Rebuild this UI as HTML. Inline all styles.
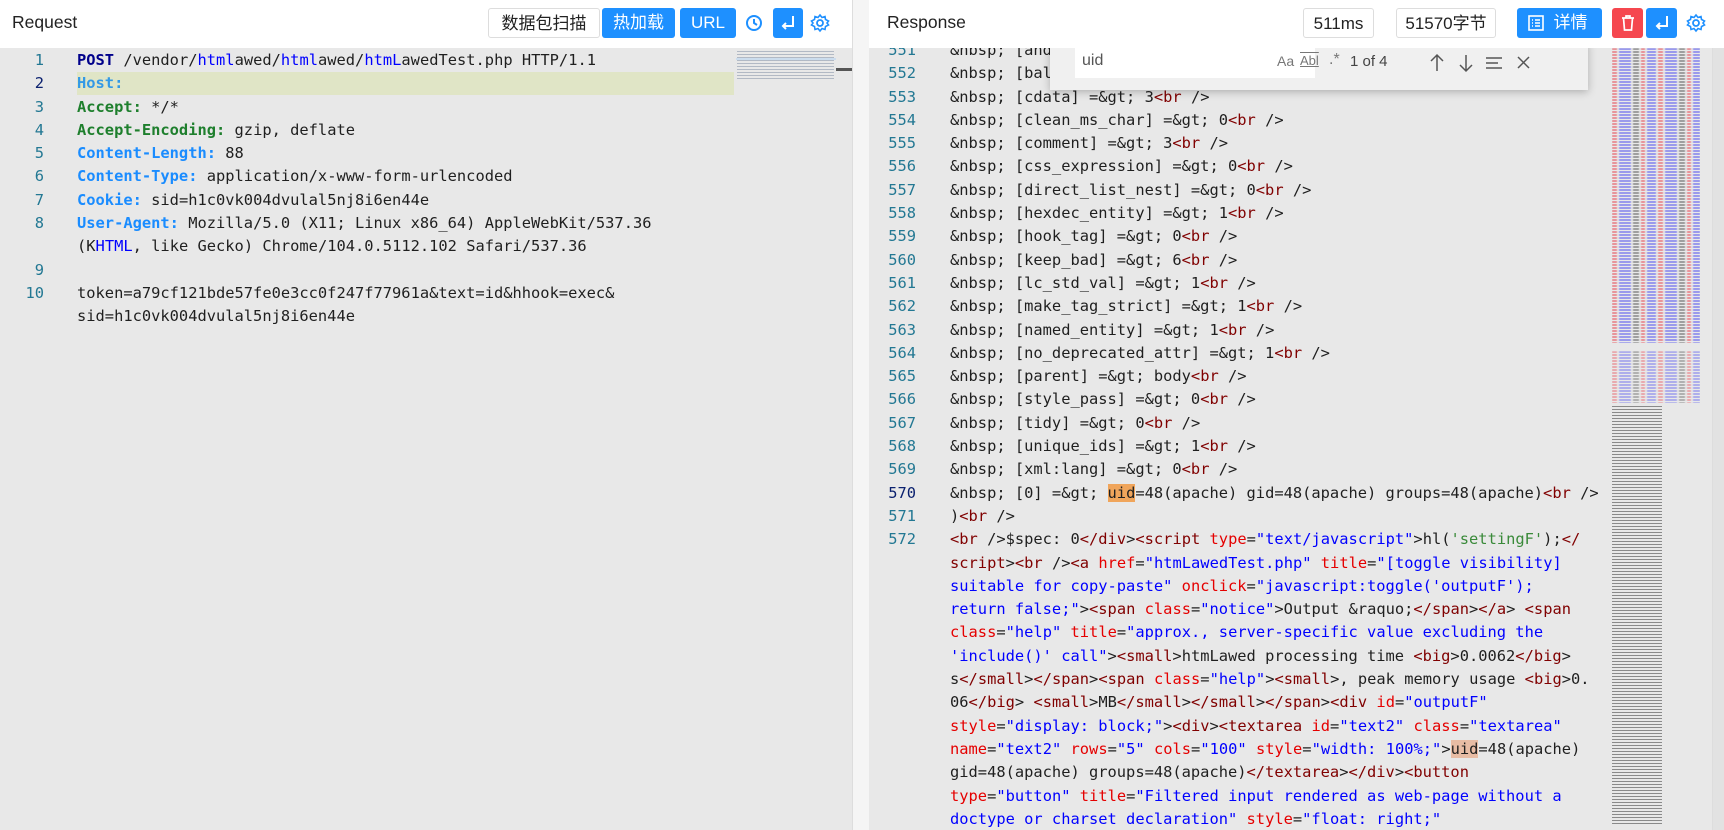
<!DOCTYPE html>
<html><head><meta charset="utf-8">
<style>
*{margin:0;padding:0;box-sizing:border-box}
body{width:1724px;height:830px;overflow:hidden;background:#f5f5f5;font-family:"Liberation Sans","Noto Sans CJK SC",sans-serif;position:relative}
.hdr{position:absolute;top:0;height:48px;background:#fff}
.title{position:absolute;top:12px;font-size:17.5px;color:#222}
.btn{position:absolute;top:8px;height:30px;border-radius:3px;font-size:17px;line-height:30px;text-align:center;color:#fff;background:#1e90ff}
.wb{background:#fff;color:#222;border:1px solid #ddd}
.ed{position:absolute;top:48px;bottom:0;background:#e8e8e8;overflow:hidden}
.code{position:absolute;font-family:"DejaVu Sans Mono",monospace;font-size:15.4px;line-height:23.3px;white-space:pre;color:#1f1f1f}
.ln{position:absolute;font-family:"DejaVu Sans Mono",monospace;font-size:15.4px;line-height:23.3px;white-space:pre;color:#237893;text-align:right}
.g{color:#1e7f2d;font-weight:bold}.b{color:#1a8cff;font-weight:bold}.bl{color:#0000ff}
.t{color:#800000}.a{color:#e50000}.s{color:#0000ff}.gr{color:#3a8a3a}
.hl{background:#f0a55b}.hl2{background:#e8bca4}
.mm{position:absolute;
background-image:repeating-linear-gradient(90deg,rgba(230,60,70,.8) 0 5px,transparent 5px 7px,rgba(70,70,240,.8) 7px 19px,transparent 19px 21px,rgba(60,60,60,.7) 21px 27px,transparent 27px 29px,rgba(230,60,70,.8) 29px 33px,transparent 33px 35px,rgba(70,70,240,.8) 35px 44px,transparent 44px 46px);
-webkit-mask:repeating-linear-gradient(180deg,#000 0 2px,transparent 2px 3px);mask:repeating-linear-gradient(180deg,#000 0 2px,transparent 2px 3px);opacity:.6;filter:blur(.4px)}
</style></head><body>

<!-- left header -->
<div class="hdr" style="left:0;width:852px"></div>
<div class="title" style="left:12px">Request</div>
<div class="btn wb" style="left:488px;width:112px">数据包扫描</div>
<div class="btn" style="left:602px;width:73px">热加载</div>
<div class="btn" style="left:680px;width:56px">URL</div>
<svg style="position:absolute;left:744px;top:12px" width="20" height="22" viewBox="0 0 20 22"><circle cx="10" cy="11" r="7" fill="none" stroke="#1e90ff" stroke-width="2"/><path d="M10 7v4l3 2" fill="none" stroke="#1e90ff" stroke-width="2"/></svg>
<div class="btn" style="left:773px;width:30px"></div>
<svg style="position:absolute;left:777px;top:13px" width="22" height="20" viewBox="0 0 22 20"><path d="M16 3v10H6M9 10l-3 3 3 3" fill="none" stroke="#fff" stroke-width="2"/></svg>
<svg style="position:absolute;left:810px;top:12px" width="20" height="22" viewBox="0 0 20 22"><circle cx="10" cy="11" r="3" fill="none" stroke="#1e90ff" stroke-width="1.8"/><path d="M10 3l2 2.5 3-1 .5 3 3 1.5-1.5 2 1.5 2-3 1.5-.5 3-3-1-2 2.5-2-2.5-3 1-.5-3-3-1.5 1.5-2-1.5-2 3-1.5.5-3 3 1z" fill="none" stroke="#1e90ff" stroke-width="1.6"/></svg>

<!-- left editor -->
<div class="ed" style="left:0;width:852px">
<div style="position:absolute;left:77px;top:24px;width:657px;height:23px;background:#e0e5c6"></div>
<div class="ln" style="left:0;width:44px;top:1px">1
<span style="color:#0b216f">2</span>
3
4
5
6
7
8

9
10</div>
<div class="code" style="left:77px;top:1px"><span style="color:#00008b;font-weight:bold">POST</span> /vendor/<span class="bl">html</span>awed/<span class="bl">html</span>awed/<span class="bl">htmL</span>awedTest.php HTTP/1.1
<span class="b" style="color:#3399e6">Host:</span>
<span class="g">Accept:</span> */*
<span class="g">Accept-Encoding:</span> gzip, deflate
<span class="b">Content-Length:</span> 88
<span class="b">Content-Type:</span> application/x-www-form-urlencoded
<span class="b">Cookie:</span> sid=h1c0vk004dvulal5nj8i6en44e
<span class="b">User-Agent:</span> Mozilla/5.0 (X11; Linux x86_64) AppleWebKit/537.36
(K<span class="bl">HTML</span>, like Gecko) Chrome/104.0.5112.102 Safari/537.36

token=a79cf121bde57fe0e3cc0f247f77961a&amp;text=id&amp;hhook=exec&amp;
sid=h1c0vk004dvulal5nj8i6en44e</div>
<div style="position:absolute;left:737px;top:3px;width:97px;height:30px;background:repeating-linear-gradient(180deg,rgba(90,110,140,.55) 0 1px,transparent 1px 3px);opacity:.7"></div>
<div style="position:absolute;left:736px;top:10px;width:100px;height:2px;background:#cde"></div>
<div style="position:absolute;left:836px;top:20px;width:16px;height:3px;background:#555"></div>
</div>
<div style="position:absolute;left:852px;top:0;width:1px;height:830px;background:#ddd"></div>

<!-- right header -->
<div class="hdr" style="left:869px;width:855px"></div>
<div class="title" style="left:887px">Response</div>
<div class="btn wb" style="left:1303px;width:71px">511ms</div>
<div class="btn wb" style="left:1396px;width:100px">51570字节</div>
<div class="btn" style="left:1517px;width:85px;padding-left:22px">详情</div>
<svg style="position:absolute;left:1527px;top:14px" width="18" height="18" viewBox="0 0 18 18"><rect x="2" y="2" width="14" height="14" fill="none" stroke="#fff" stroke-width="1.6"/><path d="M5 6h1M5 9h1M5 12h1M8 6h5M8 9h5M8 12h5" stroke="#fff" stroke-width="1.4"/></svg>
<div class="btn" style="left:1612px;width:31px;background:#f5474f"></div>
<svg style="position:absolute;left:1618px;top:13px" width="20" height="20" viewBox="0 0 20 20"><path d="M4 5h12M8 5V3h4v2M5.5 5l1 12h7l1-12" fill="none" stroke="#fff" stroke-width="1.7"/></svg>
<div class="btn" style="left:1646px;width:31px"></div>
<svg style="position:absolute;left:1651px;top:13px" width="22" height="20" viewBox="0 0 22 20"><path d="M16 3v10H6M9 10l-3 3 3 3" fill="none" stroke="#fff" stroke-width="2"/></svg>
<svg style="position:absolute;left:1686px;top:12px" width="20" height="22" viewBox="0 0 20 22"><circle cx="10" cy="11" r="3" fill="none" stroke="#1e90ff" stroke-width="1.8"/><path d="M10 3l2 2.5 3-1 .5 3 3 1.5-1.5 2 1.5 2-3 1.5-.5 3-3-1-2 2.5-2-2.5-3 1-.5-3-3-1.5 1.5-2-1.5-2 3-1.5.5-3 3 1z" fill="none" stroke="#1e90ff" stroke-width="1.6"/></svg>

<!-- right editor -->
<div class="ed" style="left:869px;width:855px">
<div class="ln" style="left:0;width:47px;top:-9px">551
552
553
554
555
556
557
558
559
560
561
562
563
564
565
566
567
568
569
<span style="color:#0b216f">570</span>
571
572</div>
<div class="code" style="left:81px;top:-9px">&amp;nbsp; [and_mark] =&amp;gt; 0<span class="t">&lt;br</span> /&gt;
&amp;nbsp; [balance] =&amp;gt; 1<span class="t">&lt;br</span> /&gt;
&amp;nbsp; [cdata] =&amp;gt; 3<span class="t">&lt;br</span> /&gt;
&amp;nbsp; [clean_ms_char] =&amp;gt; 0<span class="t">&lt;br</span> /&gt;
&amp;nbsp; [comment] =&amp;gt; 3<span class="t">&lt;br</span> /&gt;
&amp;nbsp; [css_expression] =&amp;gt; 0<span class="t">&lt;br</span> /&gt;
&amp;nbsp; [direct_list_nest] =&amp;gt; 0<span class="t">&lt;br</span> /&gt;
&amp;nbsp; [hexdec_entity] =&amp;gt; 1<span class="t">&lt;br</span> /&gt;
&amp;nbsp; [hook_tag] =&amp;gt; 0<span class="t">&lt;br</span> /&gt;
&amp;nbsp; [keep_bad] =&amp;gt; 6<span class="t">&lt;br</span> /&gt;
&amp;nbsp; [lc_std_val] =&amp;gt; 1<span class="t">&lt;br</span> /&gt;
&amp;nbsp; [make_tag_strict] =&amp;gt; 1<span class="t">&lt;br</span> /&gt;
&amp;nbsp; [named_entity] =&amp;gt; 1<span class="t">&lt;br</span> /&gt;
&amp;nbsp; [no_deprecated_attr] =&amp;gt; 1<span class="t">&lt;br</span> /&gt;
&amp;nbsp; [parent] =&amp;gt; body<span class="t">&lt;br</span> /&gt;
&amp;nbsp; [style_pass] =&amp;gt; 0<span class="t">&lt;br</span> /&gt;
&amp;nbsp; [tidy] =&amp;gt; 0<span class="t">&lt;br</span> /&gt;
&amp;nbsp; [unique_ids] =&amp;gt; 1<span class="t">&lt;br</span> /&gt;
&amp;nbsp; [xml:lang] =&amp;gt; 0<span class="t">&lt;br</span> /&gt;
&amp;nbsp; [0] =&amp;gt; <span class="hl">uid</span>=48(apache) gid=48(apache) groups=48(apache)<span class="t">&lt;br</span> /&gt;
)<span class="t">&lt;br</span> /&gt;
<span class="t">&lt;br</span> /&gt;$spec: 0<span class="t">&lt;/div</span>&gt;<span class="t">&lt;script</span> <span class="a">type</span>=<span class="s">"text/javascript"</span>&gt;hl(<span class="gr">'settingF'</span>);<span class="t">&lt;/</span>
<span class="t">script</span>&gt;<span class="t">&lt;br</span> /&gt;<span class="t">&lt;a</span> <span class="a">href</span>=<span class="s">"htmLawedTest.php"</span> <span class="a">title</span>=<span class="s">"[toggle visibility]</span>
<span class="s">suitable for copy-paste"</span> <span class="a">onclick</span>=<span class="s">"javascript:toggle('outputF');</span>
<span class="s">return false;"</span>&gt;<span class="t">&lt;span</span> <span class="a">class</span>=<span class="s">"notice"</span>&gt;Output &amp;raquo;<span class="t">&lt;/span</span>&gt;<span class="t">&lt;/a</span>&gt; <span class="t">&lt;span</span>
<span class="a">class</span>=<span class="s">"help"</span> <span class="a">title</span>=<span class="s">"approx., server-specific value excluding the</span>
<span class="s">'include()' call"</span>&gt;<span class="t">&lt;small</span>&gt;htmLawed processing time <span class="t">&lt;big</span>&gt;0.0062<span class="t">&lt;/big</span>&gt;
s<span class="t">&lt;/small</span>&gt;<span class="t">&lt;/span</span>&gt;<span class="t">&lt;span</span> <span class="a">class</span>=<span class="s">"help"</span>&gt;<span class="t">&lt;small</span>&gt;, peak memory usage <span class="t">&lt;big</span>&gt;0.
06<span class="t">&lt;/big</span>&gt; <span class="t">&lt;small</span>&gt;MB<span class="t">&lt;/small</span>&gt;<span class="t">&lt;/small</span>&gt;<span class="t">&lt;/span</span>&gt;<span class="t">&lt;div</span> <span class="a">id</span>=<span class="s">"outputF"</span>
<span class="a">style</span>=<span class="s">"display: block;"</span>&gt;<span class="t">&lt;div</span>&gt;<span class="t">&lt;textarea</span> <span class="a">id</span>=<span class="s">"text2"</span> <span class="a">class</span>=<span class="s">"textarea"</span>
<span class="a">name</span>=<span class="s">"text2"</span> <span class="a">rows</span>=<span class="s">"5"</span> <span class="a">cols</span>=<span class="s">"100"</span> <span class="a">style</span>=<span class="s">"width: 100%;"</span>&gt;<span class="hl2">uid</span>=48(apache)
gid=48(apache) groups=48(apache)<span class="t">&lt;/textarea</span>&gt;<span class="t">&lt;/div</span>&gt;<span class="t">&lt;button</span>
<span class="a">type</span>=<span class="s">"button"</span> <span class="a">title</span>=<span class="s">"Filtered input rendered as web-page without a</span>
<span class="s">doctype or charset declaration"</span> <span class="a">style</span>=<span class="s">"float: right;"</span></div>

<!-- minimap -->
<div class="mm" style="left:743px;top:0;width:88px;height:295px"></div>
<div class="mm" style="left:743px;top:303px;width:88px;height:52px;opacity:.45"></div>
<div style="position:absolute;left:743px;top:358px;width:50px;height:420px;background:repeating-linear-gradient(180deg,rgba(60,60,60,.55) 0 1px,transparent 1px 3px)"></div>
<div style="position:absolute;left:843px;top:0;width:12px;height:782px;background:#e2e2e2;border-left:1px solid #ddd"></div>

<!-- search widget -->
<div style="position:absolute;left:181px;top:-6px;width:538px;height:48px;background:#f0f0f0;box-shadow:0 2px 8px rgba(0,0,0,.25)">
<div style="position:absolute;left:25px;top:5px;width:240px;height:31px;background:#fff"></div>
<div style="position:absolute;left:32px;top:10px;font-size:16px;color:#555">uid</div>
<div style="position:absolute;left:227px;top:11px;font-size:14px;color:#777">Aa</div>
<div style="position:absolute;left:250px;top:11px;font-size:13px;color:#777;text-decoration:underline overline">Abl</div>
<div style="position:absolute;left:279px;top:9px;font-size:16px;color:#777">.*</div>
<div style="position:absolute;left:300px;top:11px;font-size:15px;color:#444">1 of 4</div>
<svg style="position:absolute;left:378px;top:10px" width="120" height="22" viewBox="0 0 120 22"><path d="M9 3v16M3 9l6-6 6 6M38 3v16M32 13l6 6 6-6M58 6h16M58 11h12M58 16h16M90 5l11 11M101 5L90 16" fill="none" stroke="#555" stroke-width="1.5"/></svg>
</div>
</div>
</body></html>
